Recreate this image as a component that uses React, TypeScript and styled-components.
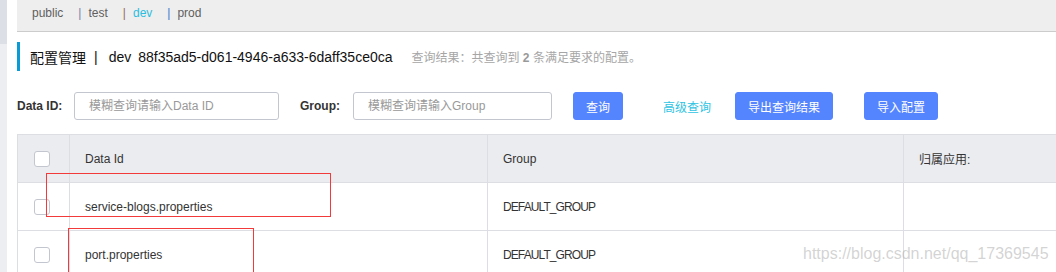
import React from "react";
import styled, { createGlobalStyle } from "styled-components";

const Global = createGlobalStyle`
  html, body { margin: 0; padding: 0; background: #fff; overflow: hidden; }
  body {
    width: 1056px; height: 272px;
    font-family: "Liberation Sans", "Noto Sans CJK SC", sans-serif;
    font-size: 12px; color: #333;
  }
`;

const Page = styled.div`
  position: relative;
  display: flex;
  width: 1056px;
  height: 272px;
  overflow: hidden;
`;

const Sidebar = styled.div`
  width: 7px;
  flex: none;
  background: linear-gradient(#dcdfe6 0, #dcdfe6 44px, #eceef2 44px, #eceef2 100%);
`;

const Main = styled.div`
  flex: 1;
  margin-left: 10px;
  min-width: 0;
`;

const TopBar = styled.div`
  height: 32px;
  box-sizing: border-box;
  background: #eeeeee;
  border-bottom: 1px solid #cccccc;
  display: flex;
  align-items: flex-start;
  padding: 6px 0 0 15px;
  line-height: 14px;
`;

const Tab = styled.span<{ $active?: boolean }>`
  color: ${(p) => (p.$active ? "#2bbde0" : "#5f5f5f")};
  margin-right: 15px;
`;

const TabSep = styled.span<{ $c: string }>`
  color: ${(p) => p.$c};
  margin-right: 7px;
`;

const Header = styled.div`
  margin-top: 10px;
  height: 29px;
  border-left: 3px solid #0a9bd6;
  display: flex;
  align-items: center;
  padding-left: 10px;
  font-size: 14px;
  color: #111;
  white-space: nowrap;
`;

const TitlePipe = styled.span`
  margin: 0 11px 0 8px;
`;

const Ns = styled.span`
  margin-right: 7px;
`;

const Result = styled.span`
  margin-left: 19px;
  font-size: 12px;
  color: #a6a6a6;
`;

const Strong = styled.b`
  font-weight: bold;
  color: #999;
`;

const FilterRow = styled.div`
  margin-top: 21px;
  display: flex;
  align-items: center;
  height: 28px;
`;

const Label = styled.label<{ $ml?: number; $w: number }>`
  font-weight: bold;
  color: #333;
  margin-left: ${(p) => p.$ml ?? 0}px;
  width: ${(p) => p.$w}px;
  flex: none;
`;

const Input = styled.input<{ $w: number }>`
  width: ${(p) => p.$w}px;
  height: 28px;
  box-sizing: border-box;
  border: 1px solid #c4c6cf;
  border-radius: 3px;
  padding: 0 14px;
  font-family: inherit;
  font-size: 12px;
  color: #333;
  outline: none;
  &::placeholder { color: #999; }
`;

const Button = styled.button<{ $ml: number }>`
  margin-left: ${(p) => p.$ml}px;
  height: 28px;
  padding: 0 12px;
  border: 1px solid #5584ff;
  background: #5584ff;
  color: #fff;
  border-radius: 3px;
  font-family: inherit;
  font-size: 12px;
  cursor: pointer;
  flex: none;
`;

const LinkBtn = styled.span`
  margin-left: 40px;
  color: #2fc3e2;
  font-size: 12px;
`;

const Table = styled.div`
  margin-top: 14px;
  width: calc(100% + 40px);
  border-top: 1px solid #dcdee3;
  border-left: 1px solid #dcdee3;
  box-sizing: border-box;
`;

const Row = styled.div<{ $head?: boolean }>`
  display: grid;
  grid-template-columns: 51px 418px 416px 1fr;
  height: 48px;
  box-sizing: border-box;
  border-bottom: 1px solid #dcdee3;
  background: ${(p) => (p.$head ? "#ebecf0" : "#fff")};
`;

const Cell = styled.div<{ $first?: boolean }>`
  display: flex;
  align-items: center;
  padding-left: ${(p) => (p.$first ? 16 : 15)}px;
  border-left: ${(p) => (p.$first ? "none" : "1px solid #dcdee3")};
  color: #333;
  font-size: 12px;
  white-space: nowrap;
`;

const Group = styled.span`
  letter-spacing: -0.9px;
`;

const Check = styled.span`
  width: 16px;
  height: 16px;
  box-sizing: border-box;
  border: 1px solid #c4c6cf;
  border-radius: 3px;
  background: #fff;
`;

const Mark = styled.div<{ $l: number; $t: number; $w: number; $h: number }>`
  position: absolute;
  left: ${(p) => p.$l}px;
  top: ${(p) => p.$t}px;
  width: ${(p) => p.$w}px;
  height: ${(p) => p.$h}px;
  box-sizing: border-box;
  border: 1px solid #f23a3a;
  pointer-events: none;
`;

const Watermark = styled.div`
  position: absolute;
  left: 803px;
  top: 245px;
  font-family: "Liberation Sans", sans-serif;
  font-size: 16px;
  line-height: 18px;
  color: rgba(175, 175, 175, 0.55);
  white-space: nowrap;
  pointer-events: none;
`;

const rows = [
  { id: "service-blogs.properties", group: "DEFAULT_GROUP" },
  { id: "port.properties", group: "DEFAULT_GROUP" },
];

export default function App() {
  return (
    <>
      <Global />
      <Page>
        <Sidebar />
        <Main>
          <TopBar>
            <Tab>public</Tab>
            <TabSep $c="#7a82a8">|</TabSep>
            <Tab>test</Tab>
            <TabSep $c="#9a6a5a">|</TabSep>
            <Tab $active>dev</Tab>
            <TabSep $c="#3a7ad0">|</TabSep>
            <Tab>prod</Tab>
          </TopBar>
          <Header>
            配置管理
            <TitlePipe>|</TitlePipe>
            <Ns>dev</Ns>
            88f35ad5-d061-4946-a633-6daff35ce0ca
            <Result>
              查询结果：共查询到 <Strong>2</Strong> 条满足要求的配置。
            </Result>
          </Header>
          <FilterRow>
            <Label $w={57}>Data ID:</Label>
            <Input $w={205} placeholder="模糊查询请输入Data ID" />
            <Label $ml={21} $w={53}>Group:</Label>
            <Input $w={199} placeholder="模糊查询请输入Group" />
            <Button $ml={21}>查询</Button>
            <LinkBtn>高级查询</LinkBtn>
            <Button $ml={24}>导出查询结果</Button>
            <Button $ml={31}>导入配置</Button>
          </FilterRow>
          <Table>
            <Row $head>
              <Cell $first>
                <Check />
              </Cell>
              <Cell>Data Id</Cell>
              <Cell>Group</Cell>
              <Cell>归属应用:</Cell>
            </Row>
            {rows.map((r) => (
              <Row key={r.id}>
                <Cell $first>
                  <Check />
                </Cell>
                <Cell>{r.id}</Cell>
                <Cell>
                  <Group>{r.group}</Group>
                </Cell>
                <Cell />
              </Row>
            ))}
          </Table>
        </Main>
        <Mark $l={46} $t={173} $w={285} $h={44} />
        <Mark $l={68} $t={228} $w={186} $h={60} />
        <Watermark>https://blog.csdn.net/qq_17369545</Watermark>
      </Page>
    </>
  );
}
